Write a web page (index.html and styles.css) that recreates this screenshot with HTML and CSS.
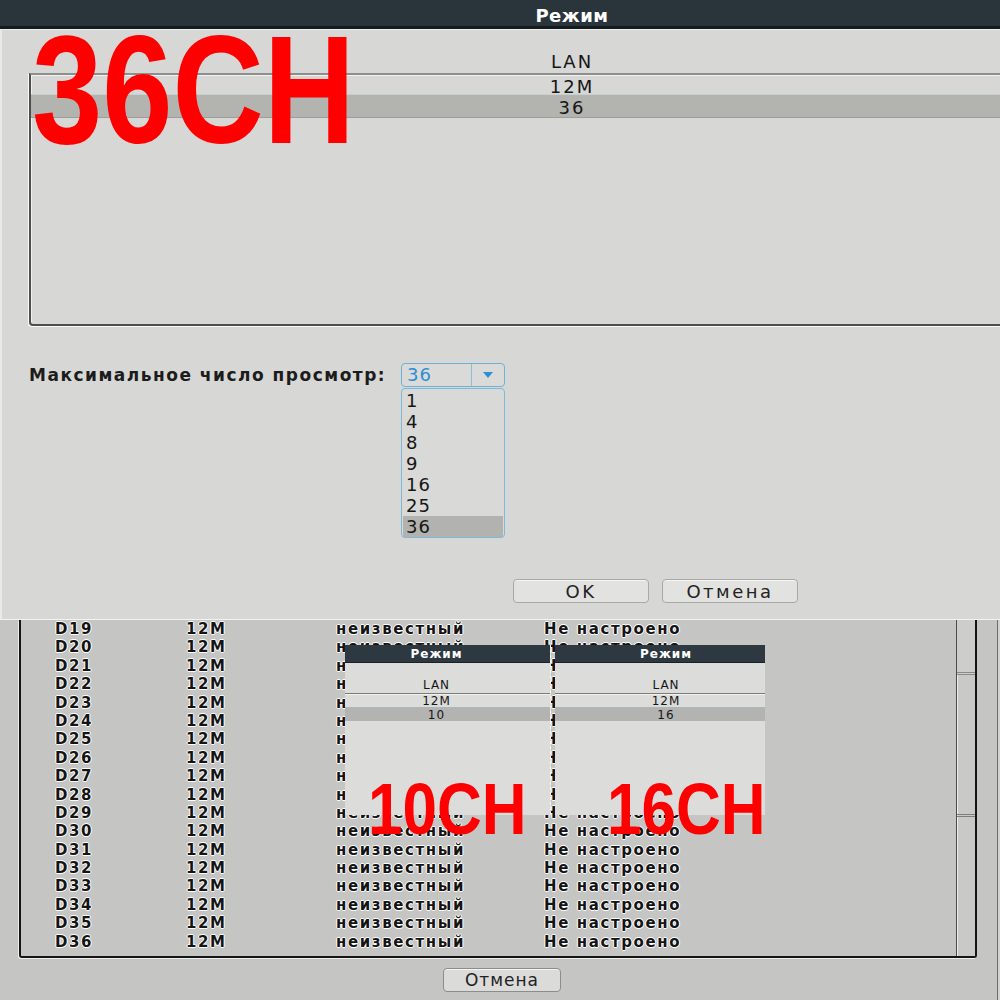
FILE: index.html
```html
<!DOCTYPE html>
<html>

<head>
    <meta charset="UTF-8" />
    <meta name="viewport" content="width=device-width, initial-scale=1" />
    <link rel="stylesheet" href="styles.css">
</head>

<body>
    <div class="screen">
        <section class="mode-dialog">
            <header class="title-bar">Режим</header>
            <div class="dialog-body">
                <div class="list-caption">LAN</div>
                <div class="list-box">
                    <div class="list-row">12M</div>
                    <div class="list-row selected">36</div>
                </div>
                <div class="view-row">
                    <span class="view-label">Максимальное число просмотр:</span>
                    <div class="combo">
                        <div class="combo-field">
                            <span class="combo-value">36</span>
                            <span class="combo-arrow"><i></i></span>
                        </div>
                        <ul class="combo-list">
                            <li>1</li>
                            <li>4</li>
                            <li>8</li>
                            <li>9</li>
                            <li>16</li>
                            <li>25</li>
                            <li class="selected">36</li>
                        </ul>
                    </div>
                </div>
                <div class="actions">
                    <button>OK</button>
                    <button>Отмена</button>
                </div>
            </div>
        </section>

        <section class="channel-panel">
            <div class="channel-box">
                <div class="channel-table" id="channels"></div>
                <div class="scrollbar">
                    <div class="scroll-cap"></div>
                    <div class="scroll-thumb"></div>
                </div>
            </div>
            <footer class="panel-footer">
                <button>Отмена</button>
            </footer>
        </section>

        <div class="mini-dialog mini-left">
            <div class="mini-title">Режим</div>
            <div class="mini-caption">LAN</div>
            <div class="mini-list">
                <div class="mini-row">12M</div>
                <div class="mini-row selected">10</div>
            </div>
        </div>
        <div class="mini-dialog mini-right">
            <div class="mini-title">Режим</div>
            <div class="mini-caption">LAN</div>
            <div class="mini-list">
                <div class="mini-row">12M</div>
                <div class="mini-row selected">16</div>
            </div>
        </div>

        <span class="stamp stamp-big">36CH</span>
        <span class="stamp stamp-10">10CH</span>
        <span class="stamp stamp-16">16CH</span>
    </div>
    <script>
        let table = document.getElementById('channels');
        for (let n = 19; n <= 36; n++) {
            let row = document.createElement('div');
            row.className = 'channel-row';
            row.innerHTML = `<span>D${n}</span><span>12M</span><span>неизвестный</span><span>Не настроено</span>`;
            table.appendChild(row);
        }
    </script>
</body>

</html>
```
FILE: styles.css
```css
* {
    box-sizing: border-box;
}

body {
    margin: 0;
    padding: 0;
    width: 1000px;
    height: 1000px;
    overflow: hidden;
    background-color: #d2d2d0;
    font-family: "DejaVu Sans", Verdana, sans-serif;
    color: #161616;
}

.screen {
    position: relative;
    width: 1000px;
    height: 1000px;
    overflow: hidden;
}

/* big dialog */
.mode-dialog {
    width: 1144px;
    height: 620px;
    background-color: #d7d7d5;
    border-bottom: 1px solid #f3f3f1;
    box-shadow: inset 2px 0 0 #e9e9e7;
}

.title-bar {
    height: 29px;
    padding-top: 7px;
    background-color: #2a353b;
    border-bottom: 3px solid #151c20;
    box-shadow: 0 1px 0 #ececea;
    color: #fff;
    font-size: 18px;
    font-weight: bold;
    line-height: 18px;
    text-align: center;
    letter-spacing: 0.5px;
}

.dialog-body {
    padding-top: 23px;
}

.list-caption {
    height: 20px;
    font-size: 18px;
    line-height: 20px;
    text-align: center;
    letter-spacing: 2px;
}

.list-box {
    height: 253px;
    margin: 1px 29px 0;
    border: 2px solid #4e4e4e;
    border-top-color: #8e8e8c;
    border-radius: 0 0 4px 4px;
    box-shadow: -1px 1px 0 #fafafa, inset 1px 1px 0 #f1f1ef;
}

.list-row {
    height: 19px;
    padding-top: 2px;
    font-size: 18px;
    line-height: 19px;
    text-align: center;
    letter-spacing: 2px;
}

.list-row.selected {
    height: 24px;
    padding-top: 2px;
    line-height: 22px;
    background-color: #b3b3af;
    border-top: 1px solid #c5cfd4;
    border-bottom: 1px solid #9d9d99;
}

.view-row {
    display: flex;
    align-items: center;
    height: 24px;
    margin-top: 37px;
    padding-left: 29px;
}

.view-label {
    width: 372px;
    font-size: 17px;
    font-weight: bold;
    color: #1c1c1c;
    letter-spacing: 1.5px;
}

.combo {
    position: relative;
    width: 104px;
    height: 24px;
}

.combo-field {
    display: flex;
    height: 24px;
    border: 1px solid #6fb2d8;
    border-radius: 4px;
    background-color: #dadad8;
}

.combo-value {
    flex: 1;
    padding-left: 5px;
    font-size: 18px;
    line-height: 22px;
    color: #2b8fd6;
    letter-spacing: 1px;
}

.combo-arrow {
    display: flex;
    align-items: center;
    justify-content: center;
    width: 33px;
    border-left: 1px solid #8fbcd6;
}

.combo-arrow i {
    width: 0;
    height: 0;
    border-left: 5px solid transparent;
    border-right: 5px solid transparent;
    border-top: 6px solid #2b8fd6;
}

.combo-list {
    position: absolute;
    top: 25px;
    left: 0;
    width: 104px;
    height: 150px;
    margin: 0;
    padding: 1px;
    list-style: none;
    border: 1px solid #7db9da;
    border-radius: 4px;
    background-color: #d9d9d7;
}

.combo-list li {
    height: 21px;
    padding-left: 3px;
    font-size: 18px;
    line-height: 21px;
    letter-spacing: 1px;
}

.combo-list li.selected {
    background-color: #b2b2ae;
}

.actions {
    display: flex;
    gap: 13px;
    margin-top: 192px;
    padding-left: 513px;
}

.actions button,
.panel-footer button {
    width: 136px;
    height: 24px;
    padding: 0;
    font-family: inherit;
    font-size: 18px;
    color: #222;
    letter-spacing: 2.5px;
    background-color: #e2e2e0;
    border: 1px solid #a8a8a6;
    border-radius: 4px;
    box-shadow: inset 0 1px 0 #f5f5f3;
}

/* channel list behind */
.channel-panel {
    width: 998px;
    height: 380px;
    padding-left: 19px;
    background-color: #c5c5c3;
    border-right: 1px solid #6e6e6c;
}

.channel-box {
    display: flex;
    width: 958px;
    height: 338px;
    border: 2px solid #151515;
    border-top: none;
    border-radius: 0 0 3px 3px;
    box-shadow: -1px 1px 0 #eeeeec;
}

.channel-table {
    flex: 1;
    padding-left: 34px;
}

.channel-row {
    display: grid;
    grid-template-columns: 131px 150px 208px auto;
    height: 18.4px;
    font-size: 15px;
    font-weight: bold;
    line-height: 18.4px;
    letter-spacing: 1.6px;
    color: #141414;
    text-shadow: 1px 0 0 #fff, -1px 0 0 #fff, 0 1px 0 #fff, 0 -1px 0 #fff;
}

.scrollbar {
    width: 19px;
    border-left: 1px solid #4c4c4a;
    background-color: #c9c9c7;
    box-shadow: inset 1px 0 0 #efefed;
}

.scroll-cap {
    height: 55px;
    background-color: #cdcdcb;
    border-bottom: 3px double #8a8a88;
}

.scroll-thumb {
    height: 142px;
    border-bottom: 3px double #7e7e7c;
}

.panel-footer {
    padding: 10px 0 0 424px;
}

.panel-footer button {
    width: 118px;
    font-size: 17px;
    letter-spacing: 1px;
    background-color: #dbdbd9;
    border-color: #8c8c8a;
}

/* pasted small dialogs */
.mini-dialog {
    position: absolute;
    top: 645px;
    width: 206px;
    height: 170px;
    background-color: #dcdcda;
}

.mini-left {
    left: 345px;
    border-right: 1px dashed #fafafa;
}

.mini-right {
    left: 555px;
    width: 210px;
}

.mini-title {
    height: 18px;
    background-color: #2d3840;
    border-bottom: 1px solid #1a2125;
    color: #fff;
    font-size: 12px;
    font-weight: bold;
    line-height: 18px;
    text-align: center;
    letter-spacing: 1px;
}

.mini-caption {
    height: 14px;
    margin-top: 15px;
    font-size: 12px;
    line-height: 14px;
    text-align: center;
    letter-spacing: 1px;
}

.mini-list {
    margin-top: 1px;
    border-top: 1px solid #7a7a78;
    box-shadow: inset 0 1px 0 #f2f2f0;
}

.mini-row {
    height: 13px;
    font-size: 12px;
    line-height: 14px;
    text-align: center;
    letter-spacing: 1px;
}

.mini-row.selected {
    height: 14px;
    background-color: #b3b3b1;
    border-top: 1px solid #a9b7bf;
}

.mini-left .mini-title,
.mini-left .mini-caption,
.mini-left .mini-row {
    padding-right: 22px;
}

.mini-right .mini-title,
.mini-right .mini-caption,
.mini-right .mini-row {
    padding-left: 12px;
}

/* red labels */
.stamp {
    position: absolute;
    font-family: "Liberation Sans", sans-serif;
    font-weight: bold;
    line-height: 1;
    color: #fe0000;
    transform: scaleX(0.82);
    transform-origin: 0 0;
}

.stamp-big {
    top: 13px;
    left: 32px;
    font-size: 154px;
}

.stamp-10 {
    top: 772px;
    left: 368px;
    font-size: 73px;
    transform: scaleX(0.85);
}

.stamp-16 {
    top: 772px;
    left: 607px;
    font-size: 73px;
    transform: scaleX(0.85);
}
```
